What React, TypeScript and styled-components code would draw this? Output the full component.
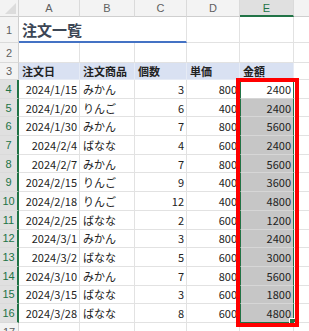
import React from "react";
import styled, { createGlobalStyle, css } from "styled-components";

const GlobalStyle = createGlobalStyle`
  html, body {
    margin: 0;
    padding: 0;
    background: #ffffff;
  }
  body {
    font-family: "Noto Sans CJK JP", "Liberation Sans", sans-serif;
  }
`;

const Frame = styled.div`
  position: relative;
  width: 309px;
  height: 331px;
  overflow: hidden;
`;

const Sheet = styled.div`
  display: grid;
  grid-template-columns: 19px 61px 55px 52px 53px 54px 40px;
  grid-template-rows: 17px 26px 20px 17px repeat(13, 18.7px) 20px;
  font-size: 11px;
  color: #222222;
`;

const Corner = styled.div`
  display: flex;
  align-items: flex-end;
  justify-content: flex-end;
  background: #f3f3f3;
  border-right: 1px solid #d4d4d4;
  border-bottom: 1px solid #cfcfcf;
  box-sizing: border-box;
  padding: 0 2px 2px 0;

  span {
    width: 11px;
    height: 11px;
    background: #dcdcdc;
    clip-path: polygon(100% 0, 100% 100%, 0 100%);
  }
`;

const ColHeader = styled.div<{ $selected?: boolean }>`
  display: flex;
  align-items: center;
  justify-content: center;
  box-sizing: border-box;
  font-family: "Liberation Sans", "DejaVu Sans", sans-serif;
  font-size: 11px;
  color: #5f5f5f;
  background: #f3f3f3;
  border-right: 1px solid #dadada;
  border-bottom: 1px solid #cfcfcf;
  ${(p) =>
    p.$selected &&
    css`
      background: #e0e0e0;
      color: #217346;
      border-bottom: 2px solid #217346;
    `}
`;

const RowHeader = styled.div<{ $selected?: boolean }>`
  display: flex;
  align-items: center;
  justify-content: center;
  box-sizing: border-box;
  font-family: "Liberation Sans", "DejaVu Sans", sans-serif;
  font-size: 11px;
  color: #5f5f5f;
  background: #f3f3f3;
  border-right: 1px solid #cfcfcf;
  border-bottom: 1px solid #dadada;
  ${(p) =>
    p.$selected &&
    css`
      background: #e0e0e0;
      color: #217346;
      border-right: 2px solid #217346;
    `}
`;

type Align = "left" | "right";

const Cell = styled.div<{ $align?: Align }>`
  position: relative;
  display: flex;
  align-items: center;
  justify-content: ${(p) => (p.$align === "right" ? "flex-end" : "flex-start")};
  box-sizing: border-box;
  padding: 0 2px 0 3px;
  white-space: nowrap;
  border-right: 1px solid #e2e2e2;
  border-bottom: 1px solid #e2e2e2;
`;

const TitleCell = styled(Cell)<{ $last?: boolean }>`
  align-items: flex-end;
  padding-bottom: 1px;
  overflow: visible;
  z-index: 1;
  font-size: 15px;
  font-weight: 700;
  color: #3c4655;
  border-bottom: 2px solid #4472c4;
  border-right: ${(p) => (p.$last ? "1px solid #e2e2e2" : "none")};
`;

const BandCell = styled(Cell)`
  background: #d9e1f2;
  font-weight: 700;
  border-right: 1px solid #e6ebf5;
  border-bottom: 1px solid #e6ebf5;
`;

const AmountCell = styled(Cell)<{ $active?: boolean; $first?: boolean; $last?: boolean }>`
  justify-content: flex-end;
  background: ${(p) => (p.$active ? "#ffffff" : "#c6c6c6")};
  border-left: 1px solid #217346;
  border-right: 1px solid #217346;
  border-bottom: 1px solid ${(p) => (p.$last ? "#217346" : "#d6d6d6")};
  ${(p) =>
    p.$first &&
    css`
      border-top: 1px solid #217346;
    `}
  ${(p) =>
    p.$last &&
    css`
      &::after {
        content: "";
        position: absolute;
        right: -3px;
        bottom: -3px;
        width: 5px;
        height: 5px;
        background: #217346;
        border: 1px solid #ffffff;
      }
    `}
`;

const Highlight = styled.div`
  position: absolute;
  left: 236px;
  top: 78px;
  width: 63px;
  height: 249px;
  box-sizing: border-box;
  border: 4px solid #ff0000;
  pointer-events: none;
`;

const columns = ["A", "B", "C", "D", "E", ""];

const orders: [string, string, number, number][] = [
  ["2024/1/15", "みかん", 3, 800],
  ["2024/1/20", "りんご", 6, 400],
  ["2024/1/30", "みかん", 7, 800],
  ["2024/2/4", "ばなな", 4, 600],
  ["2024/2/7", "みかん", 7, 800],
  ["2024/2/15", "りんご", 9, 400],
  ["2024/2/18", "りんご", 12, 400],
  ["2024/2/25", "ばなな", 2, 600],
  ["2024/3/1", "みかん", 3, 800],
  ["2024/3/2", "ばなな", 5, 600],
  ["2024/3/10", "みかん", 7, 800],
  ["2024/3/15", "ばなな", 3, 600],
  ["2024/3/28", "ばなな", 8, 600],
];

const headings = ["注文日", "注文商品", "個数", "単価", "金額"];

const App: React.FC = () => {
  return (
    <React.Fragment>
      <GlobalStyle />
      <Frame>
        <Sheet>
          <Corner>
            <span />
          </Corner>
          {columns.map((c, i) => (
            <ColHeader key={`h${i}`} $selected={c === "E"}>
              {c}
            </ColHeader>
          ))}

          <RowHeader>1</RowHeader>
          <TitleCell>注文一覧</TitleCell>
          <TitleCell />
          <TitleCell $last />
          <Cell />
          <Cell />
          <Cell />

          <RowHeader>2</RowHeader>
          {columns.map((_, i) => (
            <Cell key={`r2${i}`} />
          ))}

          <RowHeader>3</RowHeader>
          {headings.map((h) => (
            <BandCell key={h}>{h}</BandCell>
          ))}
          <Cell />

          {orders.map(([date, item, qty, price], i) => (
            <React.Fragment key={date}>
              <RowHeader $selected>{i + 4}</RowHeader>
              <Cell $align="right">{date}</Cell>
              <Cell>{item}</Cell>
              <Cell $align="right">{qty}</Cell>
              <Cell $align="right">{price}</Cell>
              <AmountCell $active={i === 0} $first={i === 0} $last={i === orders.length - 1}>
                {qty * price}
              </AmountCell>
              <Cell />
            </React.Fragment>
          ))}

          <RowHeader>17</RowHeader>
          {columns.map((_, i) => (
            <Cell key={`r17${i}`} />
          ))}
        </Sheet>
        <Highlight />
      </Frame>
    </React.Fragment>
  );
};

export default App;
